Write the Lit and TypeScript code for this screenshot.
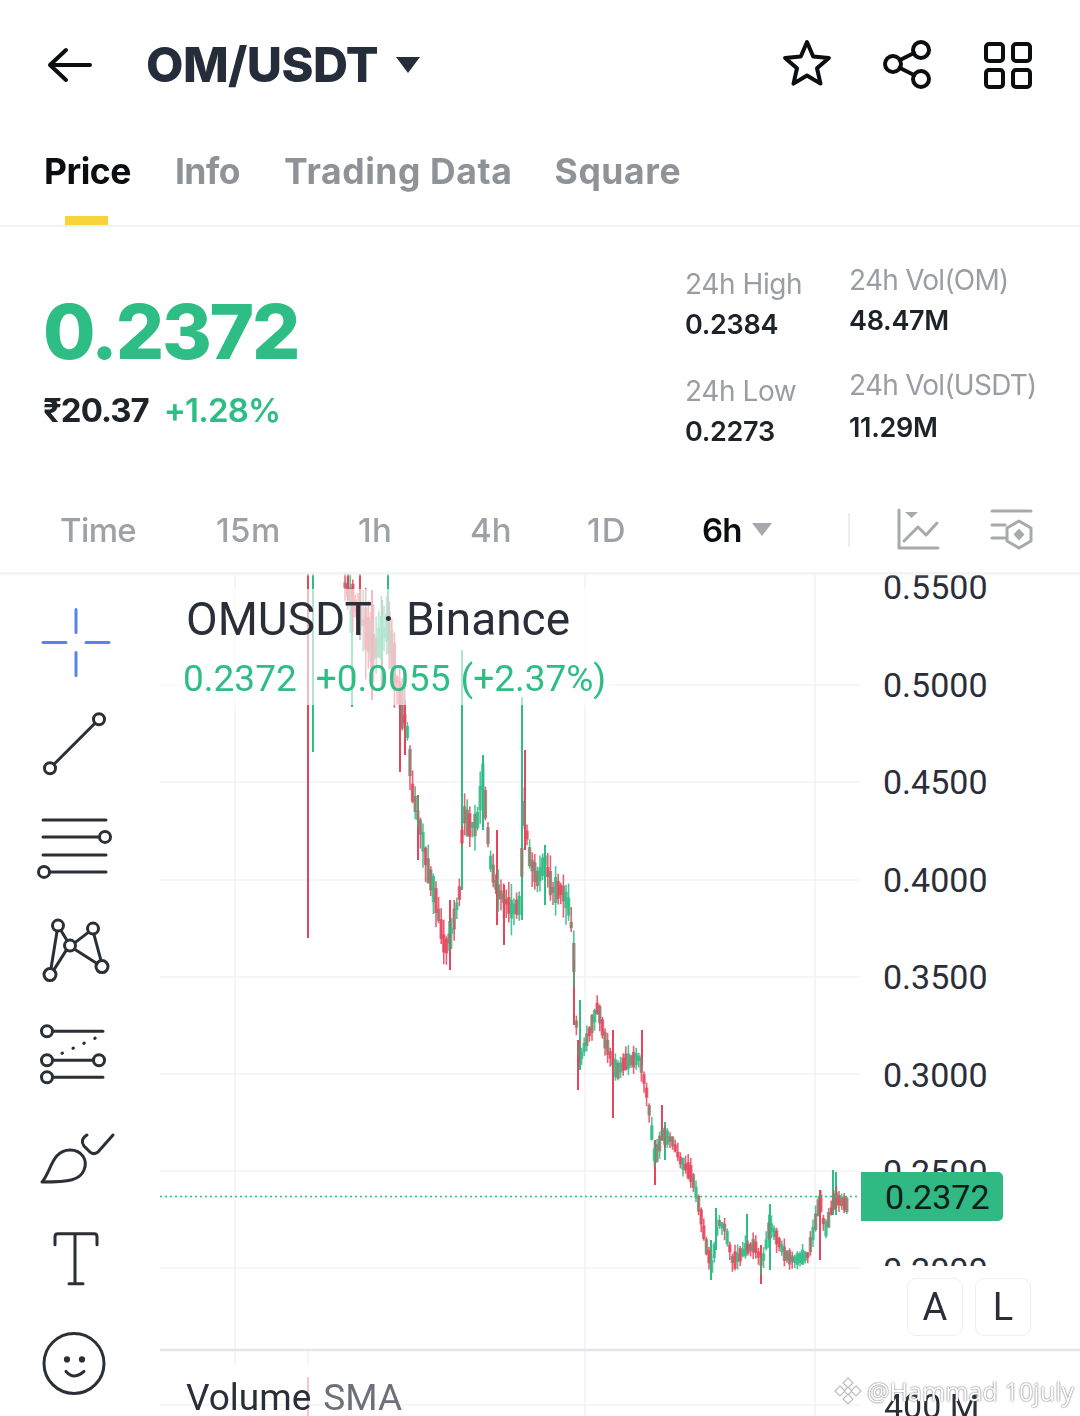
import { LitElement, html, css, svg } from "lit";
import { customElement } from "lit/decorators.js";

const GREEN = "#2ebd85";
const RED = "#e6455c";
const MIX = "#8e7c6b";

// centre of the price path: [x, y]
const PATH: [number, number][] = [
  [345, 585], [360, 615], [375, 650], [388, 625], [395, 670], [403, 710], [408, 735], [412, 790], [420, 825],
  [428, 870], [435, 895], [445, 950], [452, 930], [460, 890], [463, 810], [468, 825], [477, 825], [483, 775],
  [490, 860], [497, 890], [505, 900], [512, 910], [520, 905], [524, 810], [530, 860], [538, 880], [545, 860],
  [552, 890], [562, 890], [570, 910], [574, 960], [576, 1020], [580, 1060], [585, 1045], [598, 1006], [605, 1040],
  [612, 1060], [617, 1072], [625, 1062], [640, 1058], [648, 1100], [655, 1160], [662, 1135], [672, 1140],
  [680, 1160], [692, 1175], [700, 1210], [706, 1245], [712, 1268], [718, 1222], [725, 1228], [733, 1262],
  [745, 1250], [755, 1245], [762, 1265], [770, 1225], [778, 1240], [785, 1255], [795, 1260], [808, 1255],
  [815, 1225], [820, 1198], [825, 1232], [835, 1198], [847, 1205],
];

// long individual wicks read from the chart: [x, top, bottom, colour]
const WICKS: [number, number, number, string][] = [
  [308, 572, 938, RED], [313, 572, 752, GREEN], [352, 600, 707, GREEN], [400, 690, 772, RED], [405, 700, 755, RED],
  [348, 572, 600, RED], [360, 572, 640, RED], [388, 572, 640, GREEN], [372, 590, 700, RED], [382, 600, 690, RED],
  [462, 650, 890, GREEN], [522, 697, 920, GREEN], [525, 750, 850, RED], [574, 960, 1025, RED], [578, 1040, 1090, RED],
  [580, 1000, 1070, GREEN], [613, 1030, 1118, RED], [642, 1030, 1065, RED], [655, 1140, 1185, RED], [662, 1105, 1140, RED],
  [665, 1122, 1160, GREEN], [711, 1240, 1280, GREEN], [716, 1208, 1250, GREEN], [747, 1214, 1250, GREEN], [761, 1245, 1284, RED],
  [770, 1204, 1270, GREEN], [833, 1170, 1215, GREEN], [836, 1172, 1215, GREEN], [418, 795, 860, RED], [450, 900, 970, RED],
  [483, 755, 830, GREEN], [497, 830, 925, RED], [504, 885, 945, RED], [545, 845, 905, GREEN], [820, 1190, 1260, RED],
];

function pathY(x: number) {
  for (let i = 1; i < PATH.length; i++) {
    if (x <= PATH[i][0]) {
      const [x0, y0] = PATH[i - 1];
      const [x1, y1] = PATH[i];
      return y0 + ((x - x0) / (x1 - x0)) * (y1 - y0);
    }
  }
  return PATH[PATH.length - 1][1];
}

function buildCandles() {
  let seed = 1234;
  const rnd = () => {
    seed = (seed * 16807) % 2147483647;
    return seed / 2147483647;
  };
  const out: { x: number; top: number; bot: number; bt: number; bb: number; c: string; body: string }[] = [];
  for (let x = 345; x <= 847; x += 2.6) {
    const y = pathY(x);
    const next = pathY(x + 2.6);
    const big = x < 405 ? 44 : x < 575 ? 24 : 13;
    const h = 5 + rnd() * big;
    const up = next < y;
    const c = rnd() < 0.66 ? (up ? GREEN : RED) : up ? RED : GREEN;
    const bt = y - h / 2;
    const bb = y + h / 2;
    const body = rnd() < 0.42 ? MIX : c;
    out.push({ x, top: bt - rnd() * big * 0.7, bot: bb + rnd() * big * 0.7, bt, bb, c, body });
  }
  return out;
}
const CANDLES = buildCandles();

const STAR = Array.from({ length: 10 }, (_, i) => {
  const r = i % 2 ? 10.5 : 23;
  const a = (-90 + i * 36) * (Math.PI / 180);
  return `${(807 + r * Math.cos(a)).toFixed(1)},${(67 + r * Math.sin(a)).toFixed(1)}`;
}).join(" ");

const TOOL_ICONS = [
  svg`<g stroke="#5b82e6"><path d="M76 609V632M76 652V675M43 642H66M86 642H109"/></g>`,
  svg`<circle cx="99" cy="719" r="5.5"/><circle cx="50" cy="768" r="5.5"/><path d="M95 723L54 764"/>`,
  svg`<path d="M43 820H106M43 837H99M43 855H106M50 872H106"/><circle cx="105" cy="837" r="5.5"/><circle cx="44" cy="872" r="5.5"/>`,
  svg`<circle cx="58" cy="926" r="5.5"/><circle cx="93" cy="929" r="5.5"/><circle cx="70" cy="946" r="5.5"/><circle cx="102" cy="967" r="6"/><circle cx="50" cy="975" r="6"/>
    <path d="M57 932L51 969M61 931L67 941M54 970L66 951M75 943L88 933M94 935L101 961M75 950L97 964"/>`,
  svg`<circle cx="47" cy="1031" r="5.5"/><path d="M53 1031H103M53 1060H93M53 1077H103"/><circle cx="47" cy="1060" r="5.5"/><circle cx="99" cy="1060" r="5.5"/><circle cx="47" cy="1077" r="5.5"/>
    <path d="M62 1053L97 1037" stroke-dasharray="0.5 11.500"/>`,
  svg`<path d="M42 1182C51 1172 52 1150 70 1150C82 1150 88 1160 84 1170C80 1180 70 1182 42 1182Z"/><path d="M87 1135C82 1138 81 1142 84 1146L90 1152C92 1154 95 1154 98 1152L113 1135"/>`,
  svg`<path d="M55 1245V1237Q55 1234 58 1234H94Q97 1234 97 1237V1245M75 1234V1284M69 1284H83"/>`,
  svg`<circle cx="74" cy="1363" r="30"/><path d="M66 1371Q74 1380 84 1371"/><circle cx="67" cy="1359" r="1.6" fill="#2b2f36"/><circle cx="82" cy="1359" r="1.6" fill="#2b2f36"/>`,
];

@customElement("app-root")
export class AppRoot extends LitElement {
  static styles = css`
    :host {
      display: block;
      width: 1080px;
      height: 1416px;
      overflow: hidden;
      background: #fff;
      font-family: Inter, "Liberation Sans", sans-serif;
      color: #1e2329;
    }
    .page { filter: blur(0.45px); display: flex; flex-direction: column; height: 1416px; }
    svg { display: block; }

    .head { height: 130px; display: flex; align-items: center; padding-left: 46px; flex: none; }
    .title { margin-left: 54px; font-size: 48.5px; font-weight: 800; color: #262d3a; letter-spacing: -0.6px; line-height: 60px; }
    .caret { margin-left: 17px; }
    .head-icons { margin-left: auto; margin-right: 45px; display: flex; gap: 43px; align-items: center; }
    .head-icons .last { margin-left: 2px; }
    .ink { fill: none; stroke: #0b0e11; stroke-width: 4; stroke-linejoin: round; stroke-linecap: round; }

    .tabs { height: 97px; flex: none; display: flex; gap: 44px; padding-left: 44px; border-bottom: 2px solid #f0f1f2; box-sizing: border-box; }
    .tab { display: flex; flex-direction: column; font-size: 35.5px; line-height: 44px; padding-top: 20px; font-weight: 700; color: #8f9398; letter-spacing: -0.5px; }
    .tab.wide { letter-spacing: 0.6px; }
    .tab.wide + .tab.wide { margin-left: -2px; }
    .tab.on { color: #0b0e11; }
    .tab i { display: block; width: 43px; height: 9px; margin: auto 0 0 21px; background: #f8d33a; }

    .stats { height: 263px; flex: none; display: flex; box-sizing: border-box; }
    .left { width: 685px; padding: 66px 0 0 43px; box-sizing: border-box; flex: none; }
    .big { font-size: 76px; line-height: 76px; font-weight: 800; color: #2ebd85; letter-spacing: -2.2px; }
    .sub { display: flex; gap: 15px; margin-top: 21px; font-size: 33px; line-height: 40px; font-weight: 700; letter-spacing: -1px; }
    .sub b { font-weight: 600; color: #2ebd85; letter-spacing: -0.8px; }
    .col { display: flex; flex-direction: column; gap: 25px; width: 164px; flex: none; font-size: 28px; line-height: 40px; }
    .col.a { padding-top: 37px; gap: 27px; }
    .col.b { padding-top: 33px; width: 230px; }
    .lab { color: #9a9ea3; white-space: nowrap; letter-spacing: -0.4px; }
    .col.b .lab { letter-spacing: -0.75px; }
    .val { color: #1e2329; font-weight: 600; font-size: 27px; letter-spacing: -0.3px; padding-top: 1px; margin-bottom: -1px; }
    .col.b .g2 .val { padding-top: 3px; }

    .times { position: relative; z-index: 1; height: 82px; flex: none; display: flex; align-items: center; padding: 0 0 3px 60px; font-size: 33px; font-weight: 500; color: #9ea2a7; box-sizing: border-box; background: #fff; box-shadow: 0 3px 2px #f3f4f5; }
    .times > span { flex: none; }
    .t0 { width: 156px; letter-spacing: -0.6px; }
    .t1 { width: 142px; letter-spacing: 0.4px; }
    .t2 { width: 112px; letter-spacing: 0.4px; }
    .t3 { width: 117px; }
    .t4 { width: 115px; letter-spacing: 1px; }
    .sel { width: 146px; display: flex; align-items: center; gap: 10px; color: #0b0e11; font-weight: 600; letter-spacing: -0.8px; }
    .divider { width: 2px; height: 34px; background: #eceded; margin-right: 46px; }
    .time-icons { display: flex; gap: 50px; }
    .grey { fill: none; stroke: #a6a9ad; stroke-width: 3; stroke-linejoin: round; stroke-linecap: round; }

    .chart { flex: 1; min-height: 0; display: flex; overflow: hidden; font-family: Roboto, "Liberation Sans", sans-serif; color: #2a2e39; }
    .tools { width: 160px; flex: none; padding-top: 18.5px; box-sizing: border-box; }
    .tools svg { margin-left: 25px; fill: none; stroke: #2b2f36; stroke-width: 3; stroke-linecap: round; stroke-linejoin: round; }
    .plot { position: relative; width: 920px; flex: none; }
    .plot > svg { position: absolute; inset: 0; }
    .candles { filter: blur(0.6px); }
    .legend { position: absolute; left: 0; top: 17px; width: 455px; height: 116px; padding-left: 26px; box-sizing: border-box; background: rgba(255, 255, 255, 0.62); }
    .l1 { font-size: 46px; line-height: 60px; white-space: nowrap; }
    .l2 { display: flex; margin: 2px 0 0 -3px; font-size: 37px; line-height: 56px; color: #2ebd85; white-space: nowrap; }
    .l2 span:nth-child(2) { margin-left: 19px; }
    .l2 span:nth-child(3) { margin-left: 10px; }
    .axis { position: absolute; left: 700px; right: 0; top: 0; height: 694px; overflow: hidden; background: #fff; padding-left: 23px; box-sizing: border-box; }
    .axis div { height: 97.5px; line-height: 97.5px; font-size: 34px; }
    .axis div:first-child { margin-top: -32.75px; }
    .badge { position: absolute; left: 701px; top: 600px; width: 142px; height: 49px; line-height: 50px; padding-left: 24px; box-sizing: border-box; background: #30b983; border-radius: 0 5px 5px 0; font-size: 34px; color: #0c1d1a; }
    .toggles { position: absolute; left: 747px; top: 706px; display: flex; gap: 12px; }
    .toggles span { width: 56px; height: 58px; box-sizing: border-box; border: 1.5px solid #eceef0; border-radius: 9px; display: flex; align-items: center; justify-content: center; font-size: 38px; background: #fff; }
    .vol { position: absolute; left: 26px; top: 804px; font-size: 37px; line-height: 44px; white-space: nowrap; }
    .vol em { font-style: normal; color: #6c707a; margin-left: 12px; }
    .vol-axis { position: absolute; left: 724px; top: 814px; font-size: 34px; line-height: 40px; }
    .mark { position: absolute; left: 674px; top: 802px; display: flex; align-items: center; gap: 5px; font-family: "Open Sans", "Liberation Sans", sans-serif; font-size: 25px; line-height: 34px; letter-spacing: 0.1px; color: #fff; white-space: nowrap; text-shadow: 0 0 2px #6f6f6f, 0 0 1px #8a8a8a; }
  `;

  render() {
    return html`<div class="page">
      <div class="head">
        <svg class="ink" width="46" height="40" viewBox="46 45 46 40"><path d="M50 65H90M66 50L50 65L66 80" /></svg>
        <div class="title">OM/USDT</div>
        <svg class="caret" width="26" height="18" viewBox="0 0 26 18"><path d="M1 1H25L13 17Z" fill="#262d3a" /></svg>
        <div class="head-icons">
          <svg class="ink" width="60" height="60" viewBox="777 37 60 60"><polygon points=${STAR} /></svg>
          <svg class="ink" width="56" height="60" viewBox="880 36 56 60">
            <circle cx="921" cy="51" r="8" /><circle cx="893" cy="65" r="8" /><circle cx="921" cy="80" r="8" />
            <path d="M900 61L914 54M900 69L914 76" />
          </svg>
          <svg class="ink last" width="54" height="60" viewBox="981 35 54 60">
            <rect x="986" y="44" width="17" height="17" rx="3" /><rect x="1013" y="44" width="17" height="17" rx="3" />
            <rect x="986" y="70" width="17" height="17" rx="3" /><rect x="1013" y="70" width="17" height="17" rx="3" />
          </svg>
        </div>
      </div>

      <div class="tabs">
        <div class="tab on">Price<i></i></div>
        <div class="tab">Info</div>
        <div class="tab wide">Trading Data</div>
        <div class="tab wide">Square</div>
      </div>

      <div class="stats">
        <div class="left">
          <div class="big">0.2372</div>
          <div class="sub"><span>₹20.37</span><b>+1.28%</b></div>
        </div>
        <div class="col a">
          <div><div class="lab">24h High</div><div class="val">0.2384</div></div>
          <div><div class="lab">24h Low</div><div class="val">0.2273</div></div>
        </div>
        <div class="col b">
          <div><div class="lab">24h Vol(OM)</div><div class="val">48.47M</div></div>
          <div class="g2"><div class="lab">24h Vol(USDT)</div><div class="val">11.29M</div></div>
        </div>
      </div>

      <div class="times">
        <span class="t0">Time</span><span class="t1">15m</span><span class="t2">1h</span><span class="t3">4h</span><span class="t4">1D</span>
        <span class="sel">6h<svg width="20" height="14" viewBox="0 0 20 14"><path d="M0 0H20L10 13Z" fill="#a6a9ad" /></svg></span>
        <span class="divider"></span>
        <span class="time-icons">
          <svg class="grey" width="44" height="44" viewBox="896 508 44 44">
            <path d="M899 510V548H938M904 541L918 527L926 535L937 523" /><path d="M905 512H918L911.500 518Z" fill="#a6a9ad" stroke="none" />
          </svg>
          <svg class="grey" width="44" height="44" viewBox="990 510 44 44">
            <path d="M992 513H1031M992 527H1005M992 540H1005" />
            <path d="M1019 523L1031 530V543L1019 550L1007 543V530Z" /><path d="M1019 530.500L1024.500 536.500L1019 542.500L1013.500 536.500Z" fill="#a6a9ad" stroke="none" />
          </svg>
        </span>
      </div>

      <div class="chart">
        <div class="tools">
          ${TOOL_ICONS.map(
            (g, i) => svg`<svg width="110" height="103.3" viewBox="25 ${590.5 + i * 103.3} 110 103.3">${g}</svg>`
          )}
        </div>
        <div class="plot">
          <svg width="920" height="844" viewBox="160 572 920 844">
            <g stroke="#f1f3f5" stroke-width="1.500">
              <path d="M235 572V1365M585 572V1416M815 572V1416M308 1350V1365" />
              <path d="M160 685H860M160 782H860M160 880H860M160 977H860M160 1074H860M160 1171H860M160 1268H860M160 1405H860" />
            </g>
            <path d="M160 1350H1080" stroke="#e3e6ec" stroke-width="2.500" />
            <path d="M308 1377V1416" stroke="#eeb4bd" stroke-width="1.500" />
            <g class="candles">
              ${WICKS.map(([x, a, b, c]) => svg`<path d="M${x} ${a}V${b}" stroke=${c} stroke-width="2" />`)}
              ${CANDLES.map(
                (k) => svg`<path d="M${k.x} ${k.top.toFixed(1)}V${k.bot.toFixed(1)}" stroke=${k.c} stroke-width="1.600" opacity="0.85" />
                  <rect x=${k.x - 1.7} y=${k.bt.toFixed(1)} width="3.400" height=${(k.bb - k.bt).toFixed(1)} fill=${k.body} opacity="0.8" />`
              )}
            </g>
            <path d="M160 1196.500H860" stroke="#2ebd85" stroke-width="1.500" stroke-dasharray="2 3" />
          </svg>

          <div class="legend">
            <div class="l1">OMUSDT · Binance</div>
            <div class="l2"><span>0.2372</span><span>+0.0055</span><span>(+2.37%)</span></div>
          </div>

          <div class="axis">
            <div>0.5500</div><div>0.5000</div><div>0.4500</div><div>0.4000</div>
            <div>0.3500</div><div>0.3000</div><div>0.2500</div><div>0.2000</div>
          </div>
          <div class="badge">0.2372</div>
          <div class="toggles"><span>A</span><span>L</span></div>
          <div class="vol">Volume<em>SMA</em></div>
          <div class="vol-axis">400 M</div>
          <div class="mark">
            <svg width="28" height="28" viewBox="0 0 28 28" fill="#fff" stroke="#bdbdbd" stroke-width="1.200">
              <path d="M14 1L19 6L14 11L9 6Z" /><path d="M14 10L18 14L14 18L10 14Z" /><path d="M14 17L19 22L14 27L9 22Z" />
              <path d="M6 9L11 14L6 19L1 14Z" /><path d="M22 9L27 14L22 19L17 14Z" />
            </svg>
            <span>@Hammad 10july</span>
          </div>
        </div>
      </div>
    </div>`;
  }
}
